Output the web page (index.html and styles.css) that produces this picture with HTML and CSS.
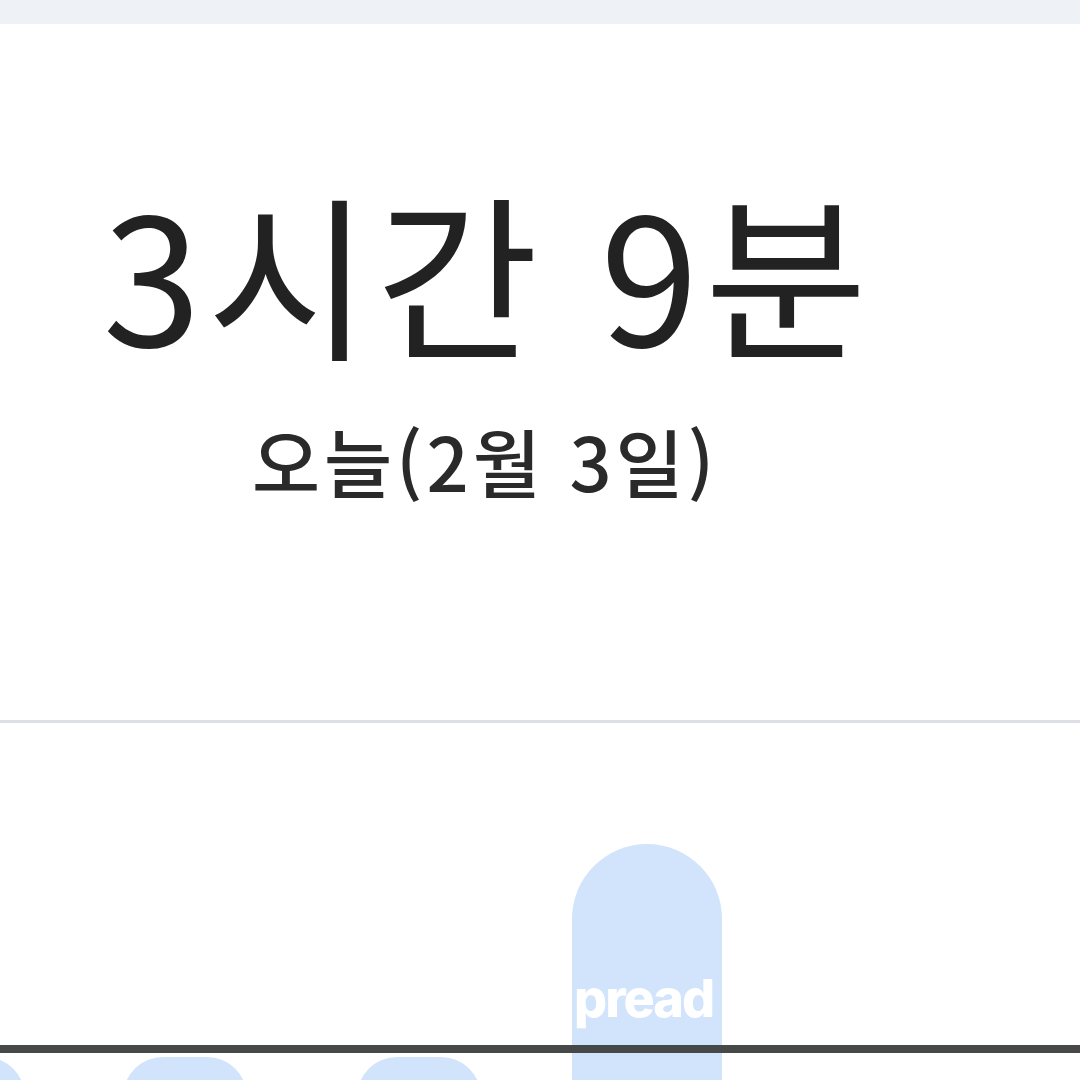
FILE: index.html
```html
<!DOCTYPE html>
<html lang="ko">
<head>
    <meta charset="UTF-8">
    <meta name="viewport" content="width=device-width, initial-scale=1.0">
    <title>화면 시간</title>
    <link rel="stylesheet" href="styles.css">
</head>
<body>
    <div class="topbar"></div>
    <div class="summary">
        <div class="total">3시간 9분</div>
        <div class="day">오늘(2월 3일)</div>
    </div>
    <div class="divider"></div>
    <div class="chart">
        <div class="bar bar-today"></div>
        <div class="watermark">pread</div>
        <div class="baseline"></div>
        <div class="lower-bars">
            <div class="bar bar-edge"></div>
            <div class="bar bar-small"></div>
            <div class="bar bar-small"></div>
        </div>
    </div>
</body>
</html>
```

FILE: styles.css
```css
body { margin: 0; background: #fff; font-family: "Noto Sans CJK KR", "Noto Sans", sans-serif; color: #222; overflow: hidden; }
.topbar { height: 24px; background: #eef2f6; }
.summary { height: 696px; display: flex; flex-direction: column; align-items: center; padding-right: 104px; box-sizing: border-box; padding-top: 158px; }
.total { font-size: 177px; line-height: 1; letter-spacing: 6px; font-weight: 400; color: #222; }
.day { font-size: 74px; line-height: 1; margin-top: 64px; letter-spacing: 4px; font-weight: 500; color: #2a2a2a; margin-right: 6px; }
.divider { height: 3px; background: #dcdfe5; }
.chart { position: relative; height: 357px; overflow: hidden; padding-top: 322px; box-sizing: border-box; }
.bar { background: #d2e3fc; }
.bar-today { position: absolute; left: 572px; top: 121px; width: 150px; height: 300px; border-radius: 75px 75px 0 0; }
.watermark { position: absolute; left: 574px; top: 250px; font-family: "Inter", "Roboto", sans-serif; font-weight: 800; font-size: 52px; line-height: 1; letter-spacing: -2px; color: #fff; }
.baseline { position: relative; height: 8px; background: #464948; }
.lower-bars { display: flex; padding-top: 4px; }
.bar-edge { width: 124px; height: 80px; margin-left: -99px; border-radius: 40px 40px 0 0; flex: none; }
.bar-small { width: 124px; height: 80px; border-radius: 40px 40px 0 0; flex: none; }
.bar-edge + .bar-small { margin-left: 98px; }
.bar-small + .bar-small { margin-left: 110px; }
```
